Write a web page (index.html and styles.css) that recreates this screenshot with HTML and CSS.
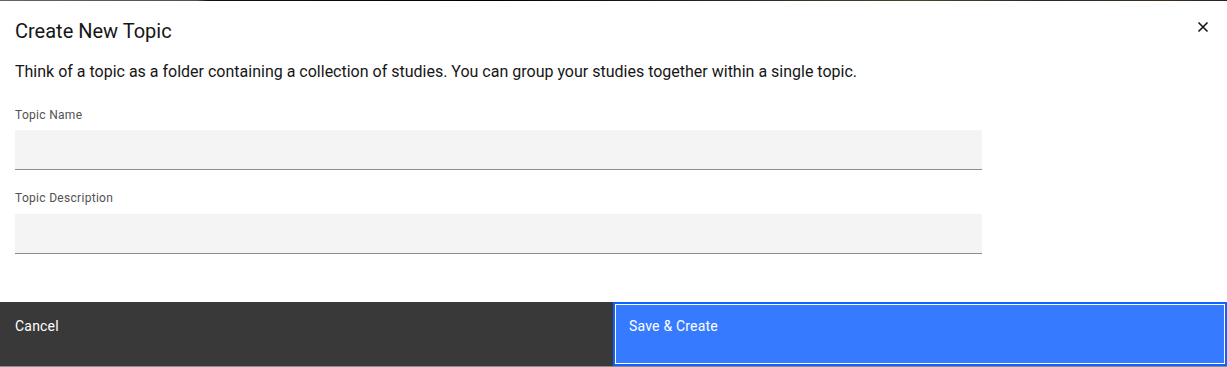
FILE: index.html
```html
<!DOCTYPE html>
<html>
<head>
<meta charset="utf-8">
<link rel="stylesheet" href="styles.css">
</head>
<body>
<div class="strip"></div>
<div class="modal">
  <div class="header">
    <h2 class="title">Create New Topic</h2>
    <button class="close" aria-label="Close">
      <svg width="16" height="16" viewBox="0 0 16 16"><path d="M3.5 3.5 L12.5 12.5 M12.5 3.5 L3.5 12.5" stroke="#161616" stroke-width="1.6"/></svg>
    </button>
  </div>
  <div class="content">
    <p class="desc">Think of a topic as a folder containing a collection of studies. You can group your studies together within a single topic.</p>
    <div class="field">
      <label class="label">Topic Name</label>
      <div class="input"></div>
    </div>
    <div class="field">
      <label class="label">Topic Description</label>
      <div class="input"></div>
    </div>
  </div>
  <div class="footer">
    <button class="btn secondary">Cancel</button>
    <button class="btn primary">Save &amp; Create</button>
  </div>
</div>
</body>
</html>
```
FILE: styles.css
```css
* { box-sizing: border-box; }
html, body { margin: 0; padding: 0; background: #fff; }
body { font-family: Roboto, "Noto Sans", "Liberation Sans", sans-serif; color: #161616; width: 1227px; height: 367px; overflow: hidden; }
.strip { height: 1px; background: linear-gradient(90deg, #6b625a 0%, #55504a 16%, #111 17%, #000 40%, #2a2a20 60%, #3a4a30 75%, #2b2a24 85%, #3e2f20 95%, #222 100%); }
.modal { display: flex; flex-direction: column; height: 366px; }
.header { display: flex; justify-content: space-between; align-items: flex-start; padding: 17px 0 0 15px; }
.title { margin: 0; font-size: 20px; font-weight: 400; line-height: 26px; }
.close { background: none; border: 0; padding: 0; width: 16px; height: 16px; margin: 1px 16px 0 0; display: flex; }
.content { padding: 0 0 0 15px; flex: 1; }
.desc { margin: 17px 0 0; font-size: 16px; line-height: 22px; }
.field { width: 967px; }
.label { display: block; font-size: 12px; line-height: 16px; color: #525252; margin-top: 24px; margin-bottom: 7px; letter-spacing: 0.3px; }
.field + .field .label { margin-top: 20px; margin-bottom: 8px; }
.input { height: 40px; background: #f4f4f4; border-bottom: 1px solid #8d8d8d; }
.footer { display: flex; height: 65px; border-bottom: 1px solid #8d8d8d; }
.btn { flex: 1; border: 0; font-family: inherit; font-size: 14px; text-align: left; padding: 16px 15px 0; display: flex; align-items: flex-start; color: #fff; letter-spacing: 0.2px; }
.secondary { background: #393939; flex: 0 0 613px; }
.primary { background: #367bff; border: 2px solid #0f62fe; box-shadow: inset 0 0 0 1px #fff; padding-left: 14px; padding-top: 14px; }
```
